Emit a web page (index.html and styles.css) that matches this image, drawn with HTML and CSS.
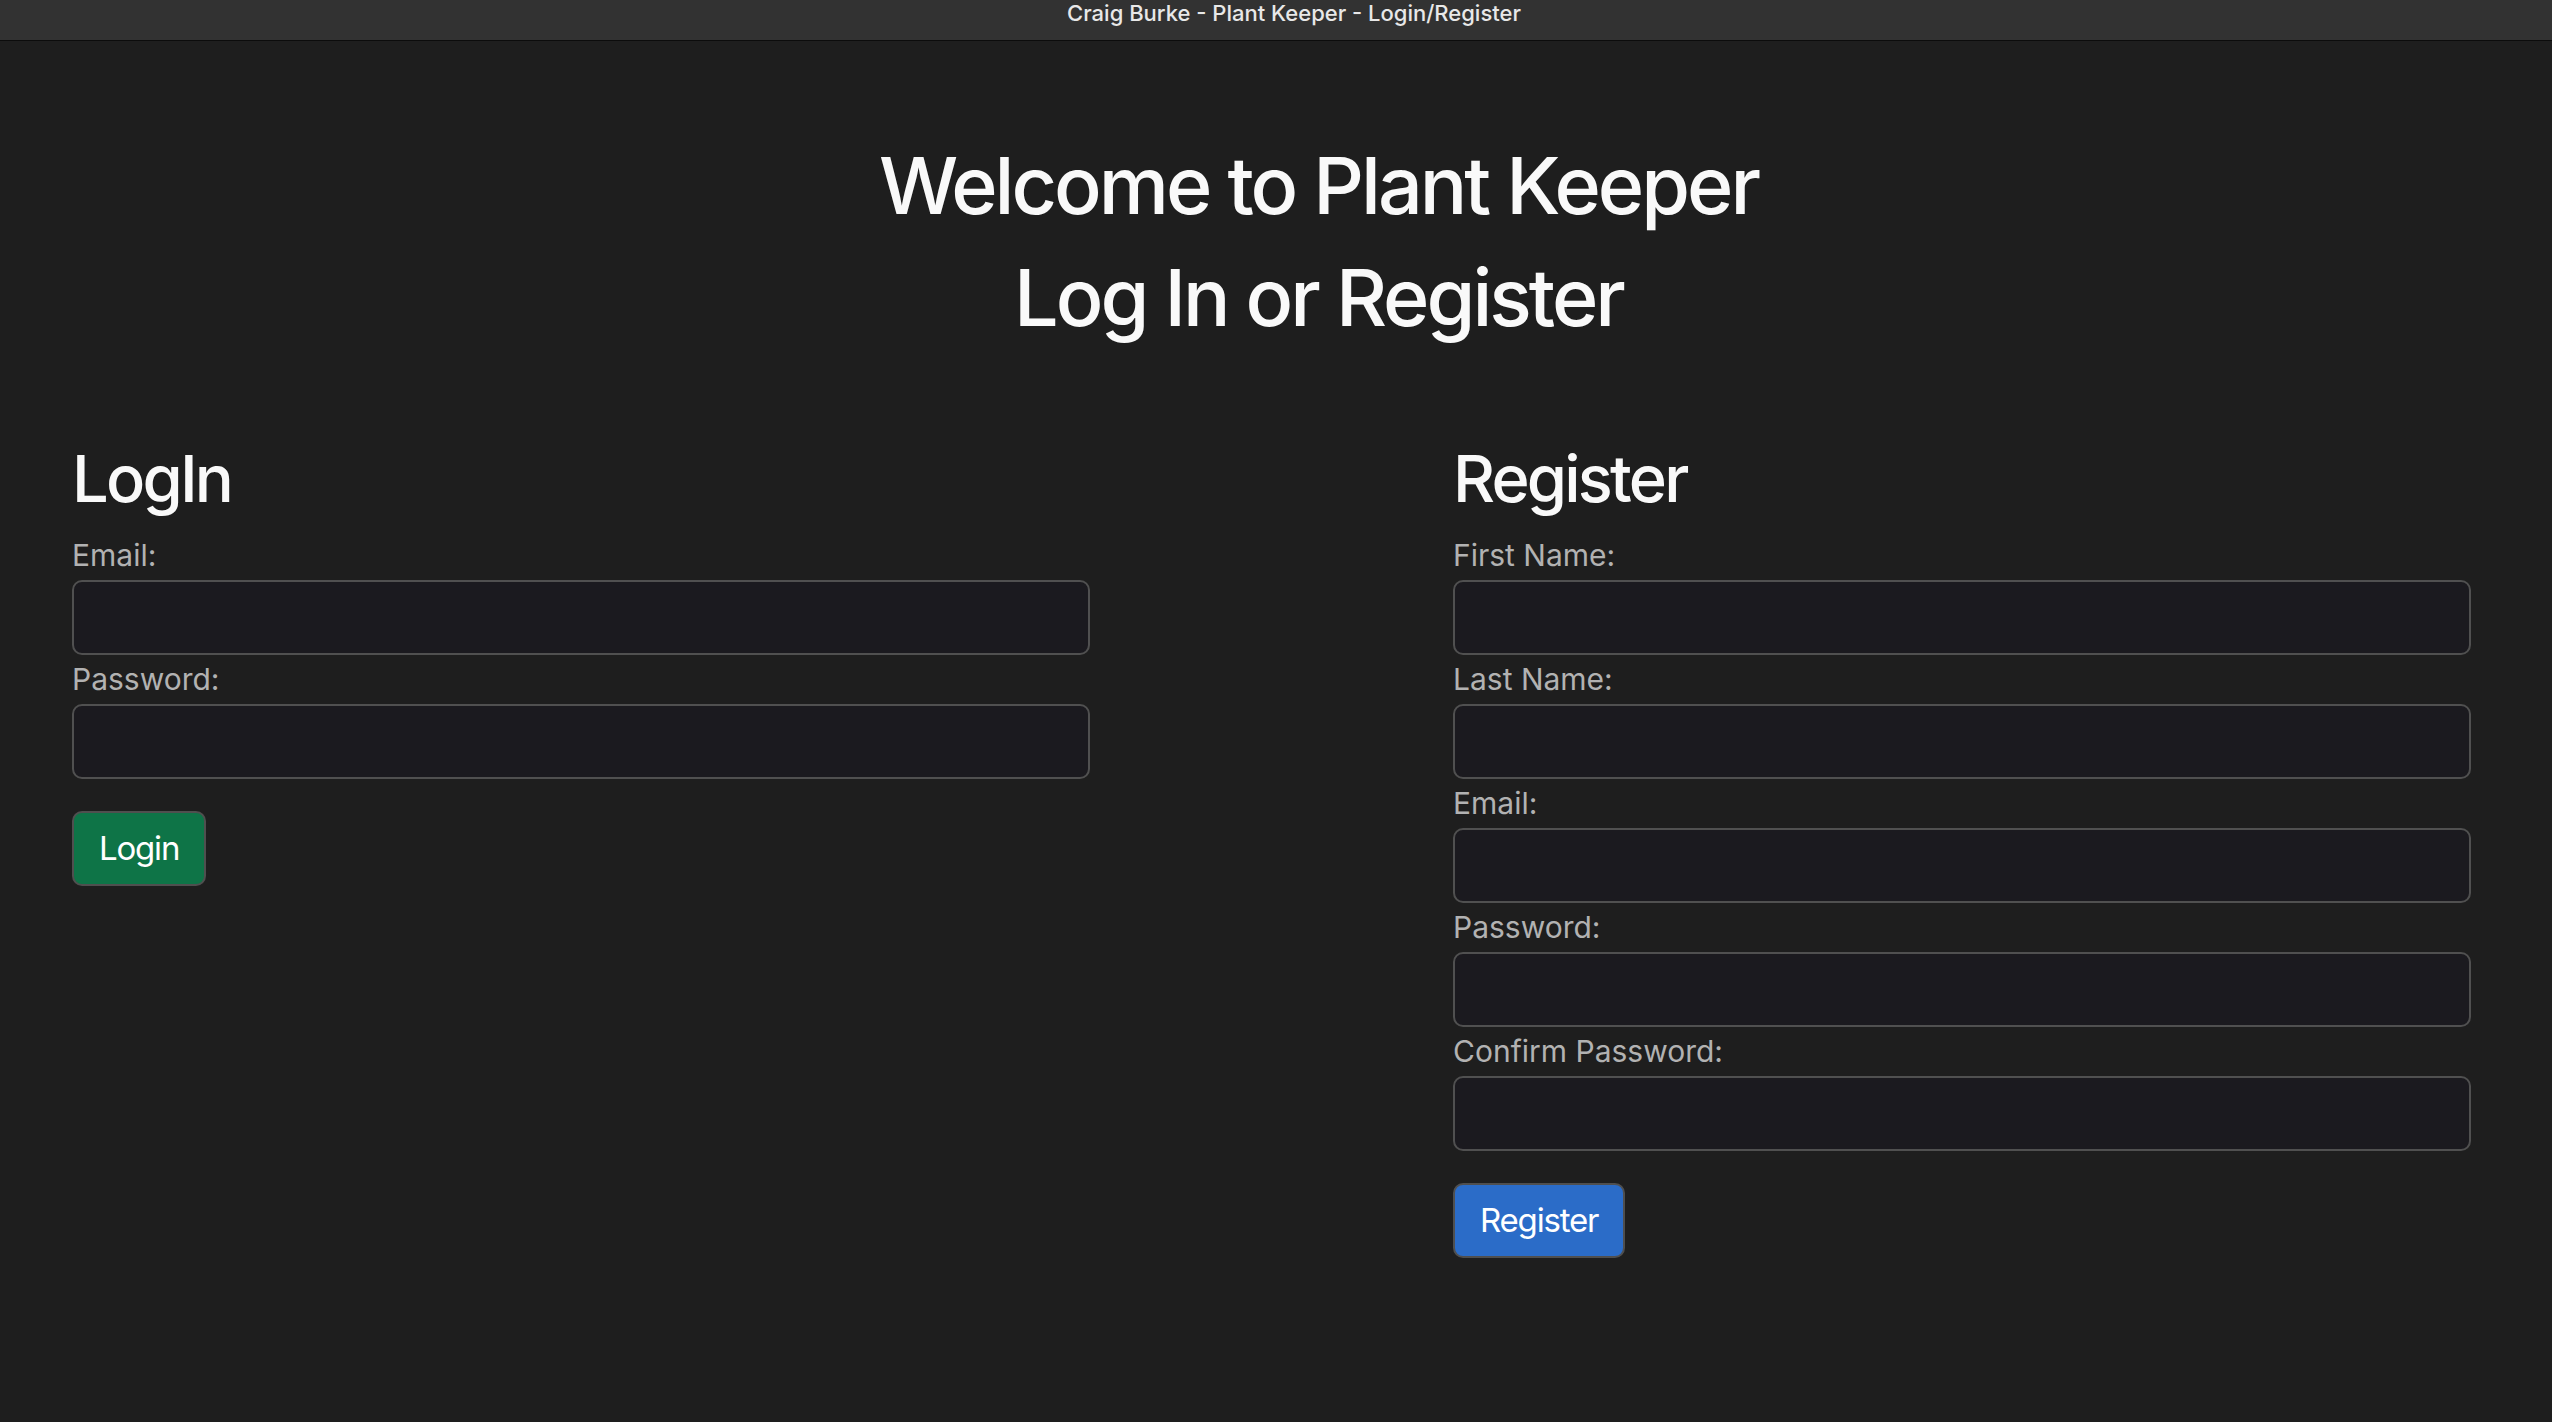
FILE: index.html
```html
<!DOCTYPE html>
<html lang="en">
<head>
<meta charset="utf-8">
<title>Craig Burke - Plant Keeper - Login/Register</title>
<link rel="stylesheet" href="styles.css">
</head>
<body>
<div class="titlebar">Craig Burke - Plant Keeper - Login/Register</div>
<main class="page">
  <header class="hero">
    <h1 class="hero-title">Welcome to Plant Keeper</h1>
    <h1 class="hero-title">Log In or Register</h1>
  </header>
  <div class="forms">
    <section class="form-col">
      <h2 class="form-title">LogIn</h2>
      <form class="form">
        <label class="form-label">Email:</label>
        <input class="form-input" type="text">
        <label class="form-label">Password:</label>
        <input class="form-input" type="password">
        <div class="form-actions"><button type="button" class="btn btn-success">Login</button></div>
      </form>
    </section>
    <section class="form-col">
      <h2 class="form-title">Register</h2>
      <form class="form">
        <label class="form-label">First Name:</label>
        <input class="form-input" type="text">
        <label class="form-label">Last Name:</label>
        <input class="form-input" type="text">
        <label class="form-label">Email:</label>
        <input class="form-input" type="text">
        <label class="form-label">Password:</label>
        <input class="form-input" type="password">
        <label class="form-label">Confirm Password:</label>
        <input class="form-input" type="password">
        <div class="form-actions"><button type="button" class="btn btn-primary">Register</button></div>
      </form>
    </section>
  </div>
</main>
</body>
</html>
```
FILE: styles.css
```css
html {
  background: #1e1e1e;
}
body {
  margin: 0;
  min-height: 1422px;
  background: #1e1e1e;
  font-family: Inter, "Noto Sans", sans-serif;
  color: #f8f8f8;
}
.titlebar {
  box-sizing: border-box;
  height: 41px;
  background: #323232;
  border-bottom: 1px solid #0c0c0c;
  color: #e8e8e8;
  font-size: 22px;
  font-weight: 500;
  line-height: 26px;
  text-align: center;
  padding-left: 36px;
}
.page {
  padding: 96px 81px 0 72px;
}
.hero {
  text-align: center;
  padding-left: 94px;
}
.hero-title {
  margin: 0 0 16px;
  font-size: 79px;
  font-weight: 500;
  line-height: 96px;
  letter-spacing: -3px;
  color: #f9f9f9;
}
.forms {
  display: grid;
  grid-template-columns: 1018px 1018px;
  column-gap: 363px;
  margin-top: 95px;
}
.form-title {
  margin: 0 0 13px;
  font-size: 65px;
  font-weight: 500;
  line-height: 78px;
  letter-spacing: -2.8px;
  color: #f9f9f9;
}
.form {
  display: flex;
  flex-direction: column;
  margin: 0;
}
.form-label {
  font-size: 30px;
  line-height: 49px;
  color: #b2b2b2;
}
.form-input {
  box-sizing: border-box;
  display: block;
  width: 100%;
  height: 75px;
  margin: 0;
  background: #1b1a1f;
  border: 2px solid #505050;
  border-radius: 10px;
  outline: none;
}
.form-actions {
  margin-top: 32px;
  display: flex;
}
.btn {
  box-sizing: border-box;
  height: 75px;
  padding: 0 25px;
  border: 2px solid #4f4f4f;
  border-radius: 10px;
  font-family: Inter, "Noto Sans", sans-serif;
  font-size: 33px;
  line-height: 71px;
  letter-spacing: -1.2px;
  color: #ffffff;
}
.btn-success {
  background: #0e7447;
}
.btn-primary {
  background: #2b6cc8;
}
```
